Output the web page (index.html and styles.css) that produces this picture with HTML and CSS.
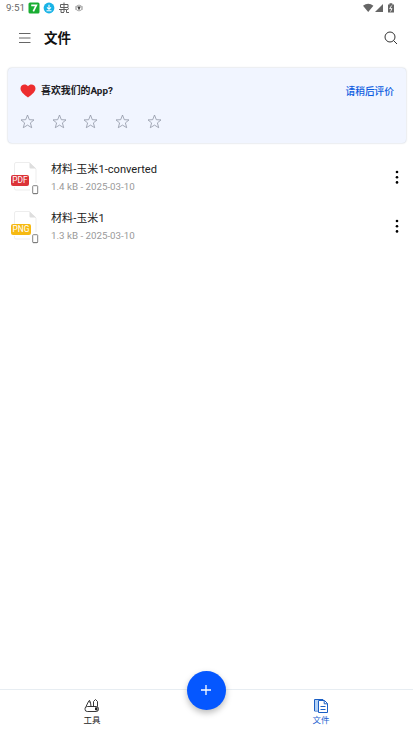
FILE: index.html
```html
<!DOCTYPE html>
<html lang="zh-CN">
<head>
<meta charset="utf-8">
<title>文件</title>
<link rel="stylesheet" href="styles.css">
</head>
<body>
<svg class="defs" width="0" height="0">
  <symbol id="star" viewBox="0 0 15 15"><path d="M7.5 1 9.3 5.7 14 5.900 10.400 8.900 11.700 13.700 7.500 11.100 3.300 13.700 4.600 8.900 1 5.900 5.700 5.700Z"/></symbol>
  <symbol id="sheet" viewBox="0 0 30 34"><path class="sheet-edge" d="M4.500 14V3Q4.500 1.500 6 1.500H19.500L26 8V22M4.500 26V27.500Q4.500 29 6 29H20"/><path class="sheet-fold" d="M19.500 1.500 26 7.500H20.500Q19.500 7.500 19.500 6.500Z"/></symbol>
  <symbol id="phone" viewBox="0 0 7 10"><rect x=".7" y=".7" width="5" height="8" rx=".7"/><path d="M1 8.500H5.500"/></symbol>
</svg>
<div class="app">
  <div class="status">
    <span class="time">9:51</span>
    <svg class="notices" width="60" height="12" viewBox="0 0 60 12">
      <rect x=".5" y=".5" width="11" height="11" rx="1.500" fill="#19ad32"/>
      <path d="M3.200 3.300H8.300L5.300 9.300" fill="none" stroke="#fff" stroke-width="1.700"/>
      <circle cx="21" cy="6" r="5.400" fill="#19b3e6"/>
      <path d="M21 2.700V7M19 5.300 21 7.300 23 5.300M18.500 8.800H23.500" fill="none" stroke="#fff" stroke-width="1.100"/>
      <path d="M32.500 2.500H40V5.500H32.500ZM36 .500V10M31 7.500H38.500V10.500H41M33 7.500V10.500H36M38.500 8 41 6.500" fill="none" stroke="#606060"/>
      <path d="M49.200 4.500H52.800L51 8.500Z" fill="#444"/><circle cx="51" cy="6" r="2.900" fill="none" stroke="#999" stroke-width=".8"/><path d="M47.500 4V8M54.500 4V8" stroke="#aaa" stroke-width=".6"/>
    </svg>
    <svg class="signals" width="33" height="10" viewBox="0 0 33 10">
      <path d="M0 2.800Q5.200-1.200 10.400 2.800L5.200 9ZM12 9 20 1V9ZM25 1.500H26.500V.300H29.300V1.500H31V9.500H25Z" fill="#666"/>
      <path d="M28.700 2.500 26.700 5.600H29L27.500 8.500" fill="none" stroke="#fff" stroke-width=".9"/>
    </svg>
  </div>
  <header class="header">
    <svg width="12" height="12" viewBox="0 0 12 12"><path d="M0 1.500H11.500M0 6H11.500M0 10.500H11.500" stroke="#555" stroke-width=".9"/></svg>
    <h1>文件</h1>
    <svg class="search" width="14" height="14" viewBox="0 0 14 14"><circle cx="6" cy="6" r="5" fill="none" stroke="#333"/><path d="M9.500 9.500 13 13" stroke="#333"/></svg>
  </header>
  <section class="rate">
    <div class="rate-top">
      <svg width="16" height="14" viewBox="0 0 16 14"><path d="M8 13.500C6 11.800.500 8.500.500 4.500.500.300 5.800-.800 8 2.200 10.200-.800 15.500.300 15.500 4.500 15.500 8.500 10 11.800 8 13.500Z" fill="#ed2d2f"/></svg>
      <strong>喜欢我们的App?</strong>
      <a class="later">请稍后评价</a>
    </div>
    <div class="stars">
      <svg><use href="#star"/></svg><svg><use href="#star"/></svg><svg><use href="#star"/></svg><svg><use href="#star"/></svg><svg><use href="#star"/></svg>
    </div>
  </section>
  <main class="files">
    <article class="file">
      <div class="thumb"><svg class="sheet"><use href="#sheet"/></svg><span class="badge pdf">PDF</span><svg class="phone"><use href="#phone"/></svg></div>
      <div class="info"><div class="name">材料-玉米1-converted</div><div class="meta">1.4 kB - 2025-03-10</div></div>
      <svg class="more" viewBox="0 0 4 14"><circle cx="2" cy="2" r="1.300"/><circle cx="2" cy="7.200" r="1.300"/><circle cx="2" cy="12.400" r="1.300"/></svg>
    </article>
    <article class="file">
      <div class="thumb"><svg class="sheet"><use href="#sheet"/></svg><span class="badge png">PNG</span><svg class="phone"><use href="#phone"/></svg></div>
      <div class="info"><div class="name">材料-玉米1</div><div class="meta">1.3 kB - 2025-03-10</div></div>
      <svg class="more" viewBox="0 0 4 14"><circle cx="2" cy="2" r="1.300"/><circle cx="2" cy="7.200" r="1.300"/><circle cx="2" cy="12.400" r="1.300"/></svg>
    </article>
  </main>
  <nav class="tabs">
    <div class="tab">
      <svg width="16" height="16" viewBox="0 0 16 16" fill="none" stroke="#222" stroke-width=".9"><rect x="1" y="8.500" width="13.500" height="5" rx="2.300"/><path d="M2 8.500 4.500 3.500 6.500 4.500 7 8.500M4.500 3.500 5.500 2.300 6.500 4.500M9.500 8.500V3.500L11.500 1.500 13.500 3.500V8.500"/><path d="M11 9.500 13.500 9.300V12.800L11 12Z" fill="#222" stroke="none"/></svg>
      <span>工具</span>
    </div>
    <button class="add" aria-label="添加"><svg width="12" height="12" viewBox="0 0 12 12"><path d="M6 1V11M1 6H11" stroke="#fff" stroke-width="1.300"/></svg></button>
    <div class="tab active">
      <svg width="16" height="16" viewBox="0 0 16 16" fill="none" stroke="#1b5fc4"><path d="M5 13H1.500V1.500H10V2.500"/><path d="M2 2H5V12.500H2Z" fill="#b5d2f5" stroke="none"/><path d="M5.500 2.500H11.500L14.500 5.500V14.500H5.500Z"/><path d="M11.200 2.500V5.800H14.500M7.500 8.500H12.500M7.500 11.500H12.500"/></svg>
      <span>文件</span>
    </div>
  </nav>
</div>
</body>
</html>
```
FILE: styles.css
```css
* { box-sizing: border-box; }
body { margin: 0; background: #fff; font-family: Roboto, "Noto Sans CJK SC", sans-serif; color: #222; }
svg { display: block; flex: none; }
.defs { position: absolute; }
.app { height: 734px; display: flex; flex-direction: column; overflow: hidden; }
.status { height: 16px; padding: 0 17px 0 6px; display: flex; align-items: center; }
.time { width: 22px; font-size: 9.8px; line-height: 16px; color: #666; white-space: nowrap; }
.signals { margin-left: auto; }
.header { height: 44px; padding: 0 15px 0 19px; display: flex; align-items: center; }
.header h1 { margin: 0 0 0 13px; font-size: 13.500px; line-height: 20px; font-weight: 700; color: #111; }
.search { margin-left: auto; }
.rate { height: 75px; margin: 8px 7px 0 8px; padding: 14px 12px 0; background: #f1f5ff; border-radius: 4px; box-shadow: 0 0 2px #b9c0cc; }
.rate-top { height: 18px; display: flex; align-items: center; }
.rate-top svg { margin-top: -1px; }
.rate strong { margin-left: 5px; font-size: 9.900px; line-height: 16px; margin-top: -1px; font-weight: 700; color: #1b1b1f; }
.later { margin-left: auto; font-size: 9.700px; font-weight: 500; color: #0b5be0; }
.stars { display: flex; gap: 16.700px; margin-top: 14px; }
.stars svg { width: 15px; height: 15px; fill: none; stroke: #8f96a5; stroke-width: .8; }
.files { padding-top: 9px; flex: 1; }
.file { height: 49.500px; padding: 0 14px 0 10px; display: flex; align-items: center; }
.thumb { position: relative; width: 30px; height: 34px; flex: none; margin-top: 2px; }
.sheet { width: 30px; height: 34px; }
.sheet-edge { fill: none; stroke: #e8e8e8; stroke-width: .8; }
.sheet-fold { fill: #dedede; }
.badge { position: absolute; left: 1px; top: 14px; height: 11px; width: 18px; border-radius: 2px; color: #fff; font-size: 8.300px; line-height: 11px; text-align: center; }
.pdf { background: #dc3439; }
.png { background: #f6b911; width: 20px; }
.phone { position: absolute; left: 22px; top: 24px; width: 7px; height: 10px; fill: #fff; stroke: #777; stroke-width: .9; }
.info { margin: 2px 0 0 11px; }
.name { font-size: 11.100px; line-height: 17px; color: #222; }
.meta { font-size: 9.750px; line-height: 17px; color: #999; }
.more { width: 4px; height: 14px; margin-left: auto; fill: #000; }
.tabs { position: relative; height: 45px; border-top: 1px solid #e7edf2; display: flex; justify-content: space-between; padding: 0 69px; }
.tab { width: 46px; padding-top: 8px; display: flex; flex-direction: column; align-items: center; font-size: 8.500px; line-height: 12px; }
.tab svg { height: 16px; }
.active { color: #1b5fd0; }
.add { position: absolute; left: 187px; top: -19px; width: 39px; height: 39px; padding: 0; border: 0; border-radius: 50%; background: #0557ff; display: grid; place-items: center; box-shadow: 0 3px 6px #0004; }
.add svg { margin: -1px 0 0 -1px; }
```
